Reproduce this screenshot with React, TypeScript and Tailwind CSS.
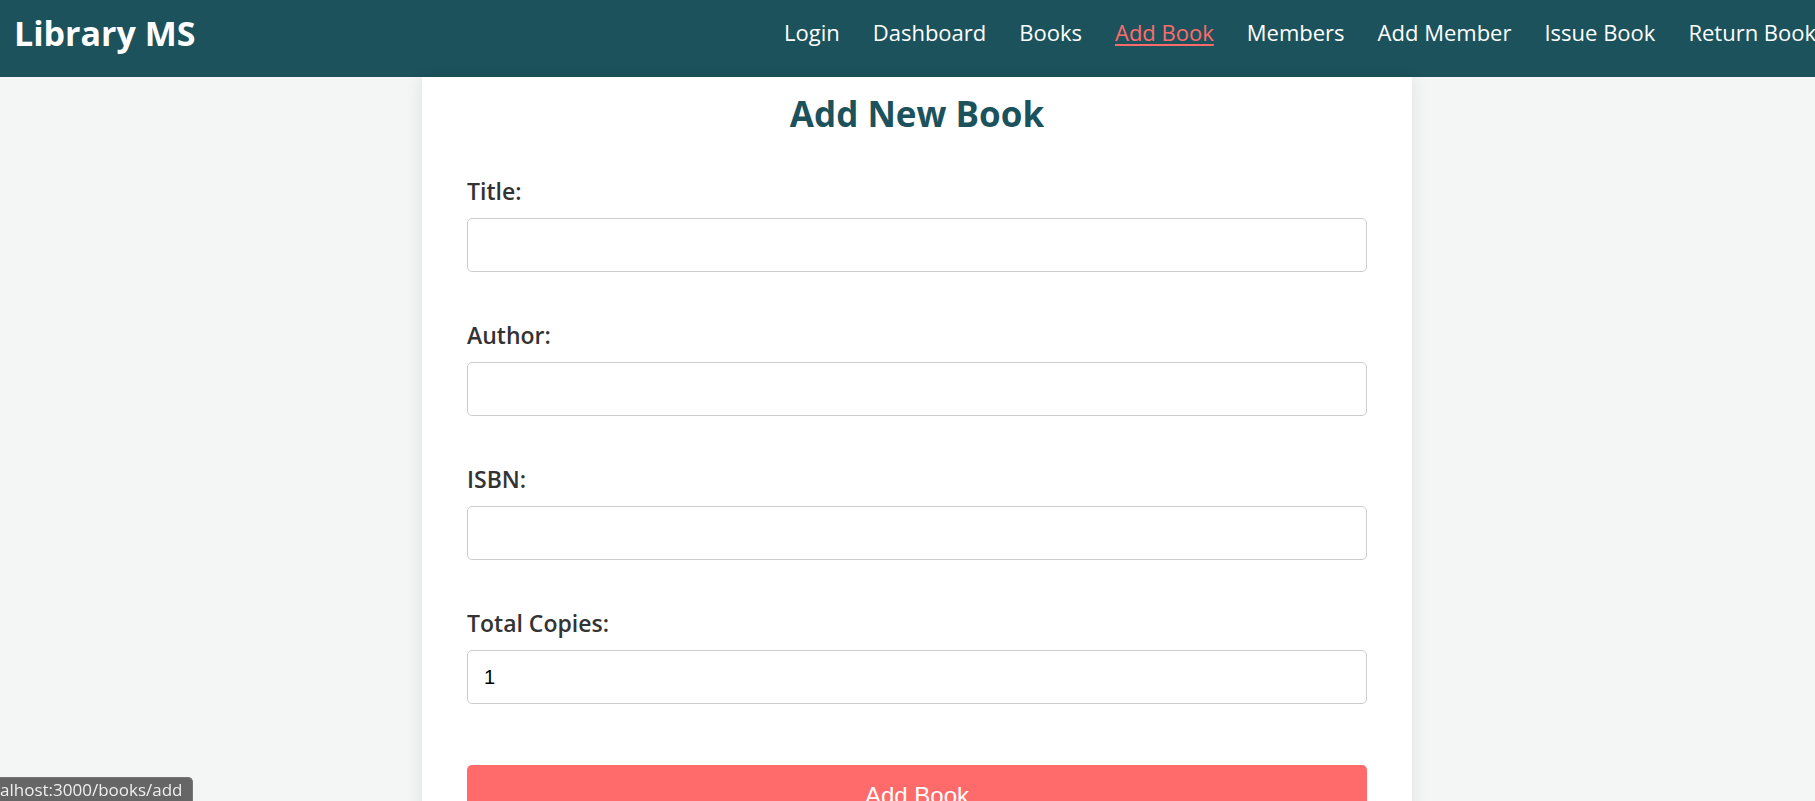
import { useState } from 'react';

const links = ['Login', 'Dashboard', 'Books', 'Add Book', 'Members', 'Add Member', 'Issue Book', 'Return Book'];

function Field({ label, value, onChange }: { label: string; value: string; onChange: (v: string) => void }) {
  return (
    <div className="mb-[48px]">
      <label className="block text-[23px] leading-[30px] font-semibold text-[#333] mb-[12px]">{label}</label>
      <input
        type="text"
        value={value}
        onChange={(e) => onChange(e.target.value)}
        className="block w-full h-[54px] px-[16px] border border-[#ccc] rounded-[5px] bg-white text-[20px] text-black outline-none"
        style={{ fontFamily: '"Liberation Sans", Arial, sans-serif' }}
      />
    </div>
  );
}

export default function App() {
  const [title, setTitle] = useState('');
  const [author, setAuthor] = useState('');
  const [isbn, setIsbn] = useState('');
  const [copies, setCopies] = useState('1');

  return (
    <div
      className="h-screen overflow-hidden bg-[#f4f6f5]"
      style={{ fontFamily: '"Open Sans", "Noto Sans", sans-serif' }}
    >
      <header className="h-[77px] bg-[#1b525c] flex items-start px-[14px] pt-[10px] overflow-hidden whitespace-nowrap">
        <div className="w-[770px] shrink-0 text-[34px] leading-[46px] font-bold text-white">Library MS</div>
        <nav className="flex gap-[33px] mt-[7px] shrink-0">
          {links.map((l) => (
            <a
              key={l}
              href="#"
              className={
                l === 'Add Book'
                  ? 'text-[22px] leading-[30px] text-[#ff6b6b] underline decoration-2 underline-offset-[3px]'
                  : 'text-[22px] leading-[30px] text-white'
              }
            >
              {l}
            </a>
          ))}
        </nav>
      </header>

      <main className="ml-[422px] w-[990px] bg-white shadow-[0_0_16px_rgba(0,0,0,0.09)] px-[45px] pt-[15px] pb-[40px]">
        <h2 className="text-center text-[35px] leading-[44px] font-bold text-[#1b525c] mb-[40px]">Add New Book</h2>
        <form onSubmit={(e) => e.preventDefault()}>
          <Field label="Title:" value={title} onChange={setTitle} />
          <Field label="Author:" value={author} onChange={setAuthor} />
          <Field label="ISBN:" value={isbn} onChange={setIsbn} />
          <div className="mb-[61px]">
            <label className="block text-[23px] leading-[30px] font-semibold text-[#333] mb-[12px]">Total Copies:</label>
            <input
              type="number"
              value={copies}
              onChange={(e) => setCopies(e.target.value)}
              className="block w-full h-[54px] px-[16px] border border-[#ccc] rounded-[5px] bg-white text-[20px] text-black outline-none"
              style={{ fontFamily: '"Liberation Sans", Arial, sans-serif' }}
            />
          </div>
          <button
            type="submit"
            className="w-full h-[64px] bg-[#ff6b6b] text-white text-[24px] rounded-[5px] pt-[17px] leading-[28px] flex justify-center items-start"
            style={{ fontFamily: '"Liberation Sans", Arial, sans-serif' }}
          >
            Add Book
          </button>
        </form>
      </main>

      <div className="fixed bottom-0 left-0 h-[24px] w-[193px] bg-[#666] rounded-tr-[5px] border-t border-r border-[#777] overflow-hidden whitespace-nowrap text-[17px] leading-[23px] text-[#eee]">
        alhost:3000/books/add
      </div>
    </div>
  );
}
